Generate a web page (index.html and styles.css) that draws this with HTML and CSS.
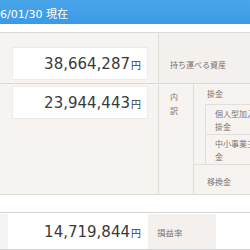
FILE: index.html
```html
<!DOCTYPE html>
<html lang="ja">
<head>
    <meta charset="UTF-8">
    <title>資産状況</title>
    <link rel="stylesheet" href="styles.css">
</head>
<body>
<div class="page">
    <div class="date-bar">2016/01/30 現在</div>
    <div class="spacer"></div>

    <div class="assets">
        <div class="row total">
            <div class="side"></div>
            <div class="value">
                <div class="amount">38,664,287<span class="yen">円</span></div>
            </div>
            <div class="label">持ち運べる資産</div>
        </div>
        <div class="row detail">
            <div class="side"></div>
            <div class="value">
                <div class="amount">23,944,443<span class="yen">円</span></div>
            </div>
            <div class="breakdown-title">内<br>訳</div>
            <div class="breakdown">
                <div class="group">
                    <div class="group-title">掛金</div>
                    <div class="sub">
                        <div class="sub-row"><div class="sub-name">個人型加入者掛金</div></div>
                        <div class="sub-row"><div class="sub-name">中小事業主掛金</div></div>
                    </div>
                </div>
                <div class="group-title transfer">移換金</div>
            </div>
        </div>
    </div>

    <div class="gap"></div>

    <div class="profit">
        <div class="side"></div>
        <div class="value">14,719,844<span class="yen">円</span></div>
        <div class="label">損益率</div>
        <div class="rate"></div>
    </div>
</div>
</body>
</html>
```

FILE: styles.css
```css
body {
    margin: 0;
    overflow: hidden;
    font-family: "DejaVu Sans", "Noto Sans CJK JP", sans-serif;
    background: #fff;
}

.page {
    width: 320px;
    margin-left: -21px;
}

.date-bar {
    height: 21px;
    padding-top: 3px;
    line-height: 24px;
    font-size: 11px;
    color: #fff;
    background: linear-gradient(#4aa6ea, #3a9ae5);
    white-space: nowrap;
}

.spacer {
    height: 8px;
    border-bottom: 1px solid #d9d9d9;
}

.assets {
    background: #f6f3f0;
}

.row {
    display: flex;
    border-bottom: 1px solid #dcd8d4;
}

.side {
    width: 33px;
    flex-shrink: 0;
}

.value {
    width: 136px;
    padding-right: 10px;
    flex-shrink: 0;
    border-right: 1px solid #e2ded9;
}

.total .value {
    padding-top: 14px;
    padding-bottom: 2px;
}

.detail .value {
    padding-top: 2px;
}

.amount {
    height: 29px;
    padding-top: 2px;
    padding-right: 6px;
    line-height: 29px;
    text-align: right;
    font-size: 15px;
    color: #3a3a3a;
    background: #fff;
    border: 1px solid #eeebe7;
}

.yen {
    font-family: "Noto Sans CJK JP", sans-serif;
    font-size: 10px;
    margin-left: 1px;
}

.label {
    flex: 1;
    padding: 14px 0 0 11px;
    line-height: 36px;
    font-family: "Noto Sans CJK JP", sans-serif;
    font-size: 8px;
    color: #777;
    background: #f3f0ed;
}

.breakdown-title {
    width: 23px;
    padding: 6px 0 0 11px;
    line-height: 14px;
    font-family: "Noto Sans CJK JP", sans-serif;
    font-size: 8px;
    color: #777;
    border-right: 1px solid #e2ded9;
}

.breakdown {
    flex: 1;
    font-family: "Noto Sans CJK JP", sans-serif;
    font-size: 8px;
    color: #777;
}

.group {
    padding-top: 3px;
    border-bottom: 1px solid #e2ded9;
}

.group-title {
    padding-left: 13px;
    line-height: 14px;
}

.group .sub {
    margin: 3px 0 0 11px;
    border-top: 1px solid #e2ded9;
    border-left: 1px solid #e2ded9;
}

.sub-row {
    padding: 2px 0 1px 9px;
    line-height: 13px;
}

.sub-row + .sub-row {
    border-top: 1px solid #e2ded9;
}

.sub-name {
    width: 50px;
}

.transfer {
    padding: 10px 0 5px 13px;
}

.gap {
    height: 17px;
    border-bottom: 1px solid #d4d4d4;
}

.profit {
    display: flex;
    height: 35px;
    margin-top: 1px;
    border-bottom: 1px solid #d4d4d4;
}

.profit .side {
    width: 29px;
    background: #f3f3f3;
}

.profit .value {
    width: 133px;
    padding-right: 7px;
    border-right: none;
    line-height: 37px;
    text-align: right;
    font-size: 15px;
    color: #3a3a3a;
}

.profit .label {
    flex: none;
    width: 59px;
    padding: 0 0 0 9px;
    line-height: 37px;
    font-size: 8.5px;
}

.rate {
    flex: 1;
}
```
